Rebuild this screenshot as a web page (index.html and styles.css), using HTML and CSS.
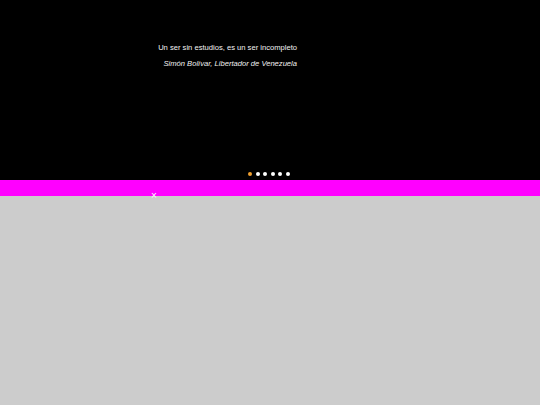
FILE: index.html
```html
<!DOCTYPE html>
<html lang="es">
<head>
<meta charset="utf-8">
<title>Cita</title>
<link rel="stylesheet" href="styles.css">
</head>
<body>
<section class="hero">
  <blockquote class="quote">
    <p class="quote-text">Un ser sin estudios, es un ser incompleto</p>
    <p class="quote-author">Simón Bolívar, Libertador de Venezuela</p>
  </blockquote>
  <div class="dots">
    <span class="dot active"></span>
    <span class="dot"></span>
    <span class="dot"></span>
    <span class="dot"></span>
    <span class="dot"></span>
    <span class="dot"></span>
  </div>
</section>
<div class="band">
  <span class="close">×</span>
</div>
<main class="content"></main>
</body>
</html>
```
FILE: styles.css
```css
html, body {
  margin: 0;
  padding: 0;
  height: 100%;
}
body {
  background: #cccccc;
  font-family: "Liberation Sans", Arial, sans-serif;
  display: flex;
  flex-direction: column;
}
.hero {
  background: #000;
  height: 180px;
  box-sizing: border-box;
  padding-top: 40px;
  display: flex;
  flex-direction: column;
}
.quote {
  margin: 0 0 0 157px;
  width: 140px;
  text-align: right;
  color: #f2f2f2;
  font-size: 7.6px;
  line-height: 16px;
}
.quote p {
  margin: 0;
  white-space: nowrap;
}
.quote-author {
  font-style: italic;
}
.dots {
  margin-top: auto;
  margin-bottom: 4px;
  display: flex;
  justify-content: center;
  gap: 3.6px;
  padding-right: 2px;
}
.dot {
  width: 4px;
  height: 4px;
  border-radius: 50%;
  background: #fff;
}
.dot.active {
  background: #f0a030;
}
.band {
  background: #ff00ff;
  height: 16px;
  position: relative;
}
.close {
  position: absolute;
  left: 151px;
  top: 11px;
  color: #ffffff;
  font-size: 10px;
  line-height: 10px;
}
.content {
  flex: 1;
  background: #cccccc;
}
```
